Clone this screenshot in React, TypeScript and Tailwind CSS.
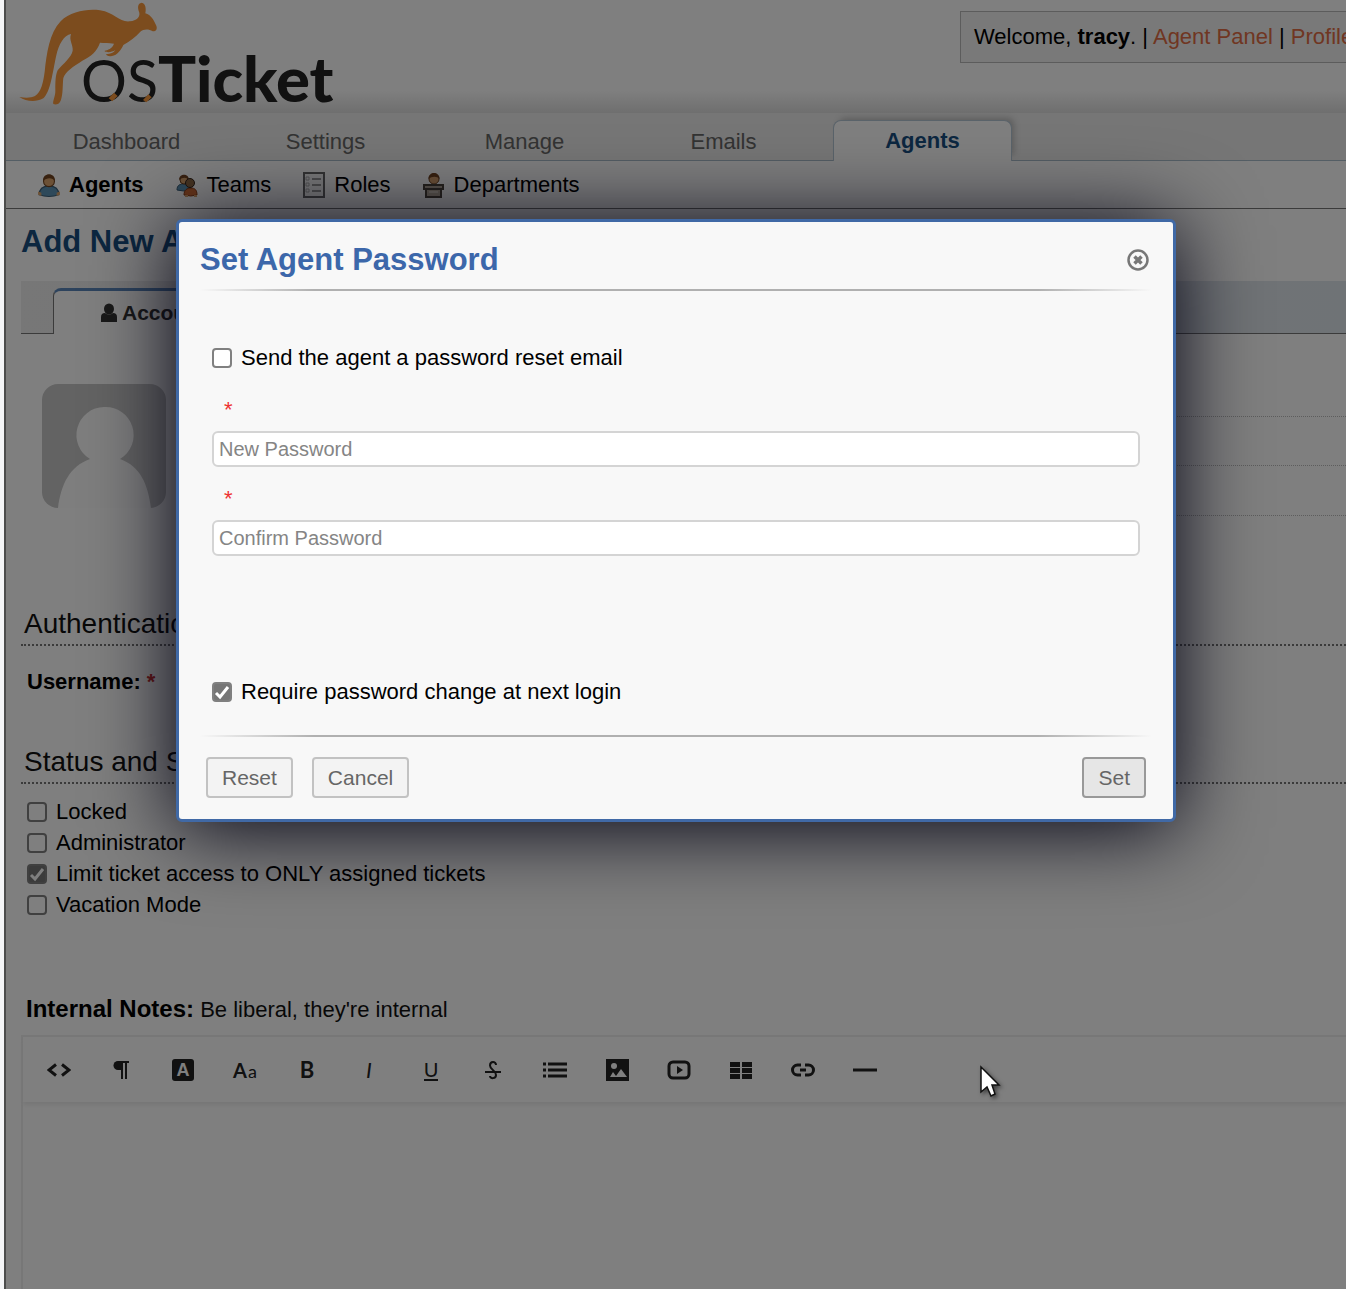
import React, { useState } from "react";

function Logo() {
  return (
    <svg viewBox="18 0 990 339" className="h-[113px] w-[330px]" role="img" aria-label="osTicket">
      <path
        fill="#f8983c"
        d="M58 291C78 294 92 294 105 288C124 276 130 245 134 215C140 160 148 100 182 64C212 34 262 26 300 31C345 38 358 68 390 64C410 61 420 52 418 38C412 22 413 10 425 8C437 10 439 26 436 40C453 44 462 62 469 77C473 88 467 95 458 94C446 86 430 87 421 95C408 110 388 124 370 135C363 150 352 166 336 168C326 170 319 167 318 163C332 161 342 158 346 150C336 157 320 159 313 153C324 149 336 147 342 131C325 128 312 130 300 128C290 156 274 168 247 182C220 200 196 214 190 234C187 258 190 280 182 302C177 313 168 315 160 312C157 303 167 290 166 270C166 248 166 226 173 211C190 190 214 172 218 152C220 134 206 122 213 102C192 106 176 132 169 166C158 215 152 276 130 295C106 308 78 304 58 291Z"
      />
      <text x="243" y="307" fontFamily="Lato, sans-serif" fill="#222222">
        <tspan fontSize="172">OS</tspan>
        <tspan fontSize="190" fontWeight="900">
          Ticket
        </tspan>
      </text>
      <path d="M326 295L342 278L353 288L337 304Z" fill="#f8983c" />
      <path d="M429 300L445 283L455 292L439 307Z" fill="#f8983c" />
    </svg>
  );
}

function AgentIcon() {
  return (
    <svg viewBox="0 0 20 22" className="h-6 w-[22px]" aria-hidden="true">
      <path d="M1 20C1 14 5 12 10 12S19 14 19 20Q10 23 1 20Z" fill="#5d93b5" stroke="#3c5f78" />
      <circle cx="10" cy="7.500" r="5" fill="#d9a36c" stroke="#70431f" />
      <path d="M4.500 7.500C4 -1 16 -1 15.500 7.500C13 4 8 4 4.500 7.500Z" fill="#70431f" />
      <path d="M0 17l3 1v3l-3-1zM20 17l-3 1v3l3-1z" fill="#d9a36c" />
    </svg>
  );
}

function TeamsIcon() {
  return (
    <svg viewBox="0 0 22 24" className="h-6 w-[22px]" aria-hidden="true">
      <path d="M1 17C1 12 4 11 8 11S14 13 14 17Q8 19 1 17Z" fill="#5d93b5" stroke="#3c5f78" />
      <circle cx="8" cy="7" r="4" fill="#d9a36c" stroke="#70431f" />
      <path d="M3 7C3 0 13 0 13 7C10 4 7 4 3 7Z" fill="#70431f" />
      <path d="M8 22C8 17 11 15 15 15S21 17 21 22Q15 24 8 22Z" fill="#cf6a32" stroke="#8a3d14" />
      <circle cx="14" cy="10" r="4.500" fill="#8d6844" stroke="#33241a" />
      <path d="M9 22h3v2h-3zM18 22h3v2h-3z" fill="#d9a36c" />
    </svg>
  );
}

function RolesIcon() {
  return (
    <svg viewBox="0 0 22 26" className="h-[26px] w-[22px]" fill="none" aria-hidden="true">
      <rect x="1" y="1" width="20" height="24" fill="#f5f5f5" stroke="#666" strokeWidth="2" />
      <path d="M9 7h9M9 13h9M9 19h9" stroke="#999" strokeWidth="2" />
      <path d="M3 5h3v3h-3zM3 11h3v3h-3zM3 17h3v3h-3z" stroke="#aaa" />
    </svg>
  );
}

function DepartmentsIcon() {
  return (
    <svg viewBox="0 0 22 26" className="h-[26px] w-[22px]" aria-hidden="true">
      <circle cx="11" cy="7" r="5" fill="#d9a36c" stroke="#70431f" />
      <path d="M5.500 7C5 -1 17 -1 16.500 7C14 4 9 4 5.500 7Z" fill="#70431f" />
      <rect x="1" y="13" width="19" height="4" fill="#b5a898" stroke="#4c443b" strokeWidth="2" />
      <rect x="3" y="17" width="15" height="8" fill="#b5a898" stroke="#4c443b" strokeWidth="2" />
      <path d="M6 20h9" stroke="#e8e0d5" />
    </svg>
  );
}

function CheckBox({ label, initial = false, name }: { label: string; initial?: boolean; name: string }) {
  const [on, setOn] = useState(initial);
  return (
    <label className="flex items-center gap-[9px] text-[22px] leading-[31px] text-black">
      <span className="relative flex size-5 shrink-0">
        <input
          type="checkbox"
          name={name}
          checked={on}
          onChange={(e) => setOn(e.target.checked)}
          className="size-5 appearance-none rounded-[4px] border-2 border-[#808080] bg-white checked:bg-[#767676]"
        />
        {on && (
          <svg viewBox="0 0 20 20" className="pointer-events-none absolute inset-0 size-5" fill="none" aria-hidden="true">
            <path d="M4 11l4 4l8-10" stroke="#fff" strokeWidth="3" />
          </svg>
        )}
      </span>
      {label}
    </label>
  );
}

const tabs = ["Dashboard", "Settings", "Manage", "Emails"];

const subTabs = [
  { label: "Agents", icon: <AgentIcon />, active: true },
  { label: "Teams", icon: <TeamsIcon />, active: false },
  { label: "Roles", icon: <RolesIcon />, active: false },
  { label: "Departments", icon: <DepartmentsIcon />, active: false },
];

const svg = "size-6";

const tools: { name: string; icon: React.ReactNode }[] = [
  {
    name: "HTML",
    icon: (
      <svg viewBox="0 0 24 24" className={svg} fill="none" stroke="currentColor" strokeWidth="3">
        <path d="M9 6.500L2 12l7 5.500M15 6.500l7 5.500l-7 5.500" />
      </svg>
    ),
  },
  {
    name: "Format",
    icon: (
      <svg viewBox="0 0 24 24" className={svg} fill="none" stroke="currentColor" strokeWidth="2">
        <path d="M11 4H20M13 3V21M17 3V21" />
        <path d="M13 3H9a4.500 4.500 0 0 0 0 9H13z" fill="currentColor" stroke="none" />
      </svg>
    ),
  },
  {
    name: "Text color",
    icon: (
      <span className="flex size-[22px] items-center justify-center rounded-[3px] bg-[#222] text-lg font-bold leading-none text-white">A</span>
    ),
  },
  {
    name: "Font family",
    icon: (
      <span className="flex items-baseline gap-px font-['Lato',sans-serif] text-xl leading-8 font-bold">
        A<span className="text-lg font-normal">a</span>
      </span>
    ),
  },
  { name: "Bold", icon: <span className="font-['Lato',sans-serif] text-[22px] leading-8 font-bold">B</span> },
  { name: "Italic", icon: <span className="font-['Lato',sans-serif] text-[22px] leading-8 italic">I</span> },
  {
    name: "Underline",
    icon: (
      <span className="border-b-2 border-[#222] font-['Lato',sans-serif] text-xl leading-5">U</span>
    ),
  },
  {
    name: "Strikethrough",
    icon: (
      <svg viewBox="0 0 24 24" className={svg} fill="none" stroke="currentColor" strokeWidth="2">
        <path d="M4 14h16" />
        <path d="M15 7C15 3 9 3 9 7.500C9 12 15 12 15 17C15 21 9 21 9 18" />
      </svg>
    ),
  },
  {
    name: "List",
    icon: (
      <svg viewBox="0 0 26 24" className="h-6 w-[26px]" stroke="currentColor" strokeWidth="3">
        <path d="M1 6h3M6 6h19M1 12h3M6 12h19M1 18h3M6 18h19" />
      </svg>
    ),
  },
  {
    name: "Image",
    icon: (
      <svg viewBox="0 0 24 24" className={svg}>
        <rect x="1" y="1" width="23" height="22" fill="currentColor" />
        <circle cx="9" cy="8" r="3" fill="#fff" />
        <path d="M5 19l3-5l3 4l5-7l6 8z" fill="#fff" />
      </svg>
    ),
  },
  {
    name: "Video",
    icon: (
      <svg viewBox="0 0 26 24" className="h-6 w-[26px]" fill="none" stroke="currentColor" strokeWidth="3">
        <rect x="3" y="4" width="20" height="16" rx="4" />
        <path d="M11 8l6 4l-6 4z" fill="currentColor" stroke="none" />
      </svg>
    ),
  },
  {
    name: "Table",
    icon: (
      <svg viewBox="0 0 24 24" className={svg} fill="currentColor">
        <path d="M1 4h10v5H1zM13 4h10v5H13zM1 10h10v5H1zM13 10h10v5H13zM1 16h10v5H1zM13 16h10v5H13z" />
      </svg>
    ),
  },
  {
    name: "Link",
    icon: (
      <svg viewBox="0 0 26 24" className="h-6 w-[26px]" fill="none" stroke="currentColor" strokeWidth="3">
        <path d="M11 7H7.500a5 5 0 0 0 0 10H11M15 7h3.500a5 5 0 0 1 0 10H15M10 12h6" />
      </svg>
    ),
  },
  {
    name: "Line",
    icon: (
      <svg viewBox="0 0 26 24" className="h-6 w-[26px]" stroke="currentColor" strokeWidth="3">
        <path d="M1 12h24" />
      </svg>
    ),
  },
];

function PasswordField({ id, placeholder }: { id: string; placeholder: string }) {
  return (
    <div className="flex flex-col">
      <label htmlFor={id} className="h-8 pl-3 text-[22px] leading-[22px] text-[#ee3333]">
        *
      </label>
      <input
        id={id}
        type="password"
        aria-label={placeholder}
        placeholder={placeholder}
        className="h-9 w-full rounded-md border-2 border-[#d4d4d4] bg-white px-[5px] text-[20px] text-black outline-none placeholder:text-[#858585]"
      />
    </div>
  );
}

function FadedRule() {
  return (
    <div className="flex" aria-hidden="true">
      <div className="h-[2px] w-[12%] bg-linear-to-r from-transparent to-[#b0b0b0]" />
      <div className="h-[2px] flex-1 bg-[#b0b0b0]" />
      <div className="h-[2px] w-[12%] bg-linear-to-l from-transparent to-[#b0b0b0]" />
    </div>
  );
}

function PasswordDialog() {
  return (
    <section
      role="dialog"
      aria-modal="true"
      aria-labelledby="dialog-title"
      className="w-full max-w-[1000px] rounded-md border-3 border-[#4069a6] bg-[#f8f8f8] px-[21px] pt-5 pb-[21px] shadow-[0_6px_84px_#000011]"
    >
      <header className="mb-[11px] flex items-center justify-between">
        <h2 id="dialog-title" className="text-[31px] leading-9 font-bold text-[#3c67aa]">
          Set Agent Password
        </h2>
        <button type="button" aria-label="Close">
          <svg viewBox="0 0 28 28" className="size-7" fill="none" stroke="#777">
            <circle cx="14" cy="14" r="9.500" strokeWidth="2.500" />
            <path d="M10.500 10.500l7 7M17.500 10.500l-7 7" strokeWidth="3.500" />
          </svg>
        </button>
      </header>
      <FadedRule />
      <form onSubmit={(e) => e.preventDefault()}>
        <div className="flex flex-col px-3 pt-[51px] pb-7">
          <CheckBox name="reset-email" label="Send the agent a password reset email" />
          <div className="mt-[26px] flex flex-col gap-[21px]">
            <PasswordField id="new-password" placeholder="New Password" />
            <PasswordField id="confirm-password" placeholder="Confirm Password" />
          </div>
          <div className="mt-30">
            <CheckBox name="require-change" initial label="Require password change at next login" />
          </div>
        </div>
        <FadedRule />
        <footer className="mt-5 flex items-center gap-[19px] px-[6px] text-[21px] text-[#666]">
          <button type="reset" className="h-[41px] rounded-[4px] border-2 border-[#c2c2c2] bg-[#f3f3f3] px-[14px]">
            Reset
          </button>
          <button type="button" className="h-[41px] rounded-[4px] border-2 border-[#c2c2c2] bg-[#f3f3f3] px-[14px]">
            Cancel
          </button>
          <button type="submit" className="ml-auto h-[41px] rounded-[4px] border-2 border-[#999] bg-[#e6e6e6] px-[14px]">
            Set
          </button>
        </footer>
      </form>
    </section>
  );
}

function SectionHeading({ children }: { children: React.ReactNode }) {
  return (
    <h3 className="border-b-2 border-dotted border-[#777] pl-[3px] text-[28px] leading-10 text-[#111]">{children}</h3>
  );
}

export default function App() {
  return (
    <div className="flex min-h-screen bg-[#f4f5f7] pl-1 font-['Liberation_Sans',Arial,sans-serif]">
      <div className="relative flex min-w-0 flex-1 flex-col overflow-hidden border-l-2 border-[#4c4c4c] bg-white">
        <header className="flex items-start bg-linear-to-b from-white from-80% to-[#dedede]">
          <div className="w-[954px] shrink-0">
            <Logo />
          </div>
          <p className="mt-[11px] shrink-0 border border-[#b8b8b8] bg-[#f3f3f3] px-[13px] text-[22px] leading-[50px] whitespace-nowrap text-black">
            Welcome, <strong>tracy</strong>. | <a href="#panel" className="text-[#e06c44]">Agent Panel</a> |{" "}
            <a href="#profile" className="text-[#e06c44]">Profile</a>
          </p>
        </header>

        <nav className="flex h-12 items-end gap-5 border-b border-[#a9bccb] bg-[#ececec] pl-[31px] text-[22px]">
          {tabs.map((t) => (
            <a key={t} href="#tab" className="w-[179px] shrink-0 text-center leading-9 text-[#666]">
              {t}
            </a>
          ))}
          <a
            href="#agents"
            className="-mb-px h-[41px] w-[179px] shrink-0 rounded-t-lg border border-b-0 border-[#b5c6d4] bg-white text-center leading-10 font-bold text-[#184e81] shadow-[4px_-4px_6px_-2px_#bbb]"
          >
            Agents
          </a>
        </nav>

        <nav className="flex h-12 items-center gap-8 border-b border-[#777] bg-white pl-8 text-[22px] text-black">
          {subTabs.map((s) => (
            <a key={s.label} href="#sub" className={s.active ? "flex items-center gap-[9px] font-bold" : "flex items-center gap-[9px]"}>
              {s.icon}
              {s.label}
            </a>
          ))}
        </nav>

        <main className="flex flex-1 flex-col pl-[15px]">
          <h1 className="pt-[15px] pb-[21px] text-[31px] leading-9 font-bold text-[#184e81]">Add New Agent</h1>

          <div className="flex h-[53px] items-end bg-linear-to-r from-[#eeeeee] to-[#dfe6ec]">
            <div className="h-full w-8 border-b border-[#777]" />
            <a
              href="#account"
              className="flex h-[46px] w-[230px] items-center gap-1 rounded-tl-lg border-t-3 border-l border-t-[#5b87bb] border-l-[#777] bg-white pl-[46px] text-[21px] font-bold text-[#333]"
            >
              <svg viewBox="0 0 18 20" className="h-5 w-[18px]" fill="#333" aria-hidden="true">
                <ellipse cx="9" cy="6" rx="5" ry="5.500" />
                <path d="M1 19V14q0-4 4-4q4 3 8 0q4 0 4 4v5z" />
              </svg>
              Account
            </a>
            <div className="h-full flex-1 border-b border-[#777]" />
          </div>

          <div className="mb-[87px] flex items-start gap-10">
            <svg viewBox="0 0 124 124" className="mt-[50px] ml-[21px] size-31 shrink-0 rounded-2xl bg-[#c6c6c6]" role="img" aria-label="Avatar">
              <path d="M62 23a28 28 0 0 1 16 52C98 82 106 100 109 124H16C19 100 28 82 48 75A28 28 0 0 1 62 23Z" fill="#fcfcfc" />
            </svg>
            <div className="flex-1">
              <div className="h-[83px] border-b border-dotted border-[#bbb]" />
              <div className="h-[49px] border-b border-dotted border-[#bbb]" />
              <div className="h-[50px] border-b border-dotted border-[#bbb]" />
            </div>
          </div>

          <div className="pt-px">
            <SectionHeading>Authentication</SectionHeading>
          </div>
          <p className="py-5 pl-[6px] text-[22px] leading-8 font-bold text-black">
            Username: <span className="text-[#c83030]">*</span>
          </p>
          <div className="pt-6">
            <SectionHeading>Status and Settings</SectionHeading>
          </div>
          <div className="flex flex-col pt-3 pl-[6px]">
            <CheckBox name="locked" label="Locked" />
            <CheckBox name="admin" label="Administrator" />
            <CheckBox name="limit" initial label="Limit ticket access to ONLY assigned tickets" />
            <CheckBox name="vacation" label="Vacation Mode" />
          </div>

          <p className="mt-[73px] pl-[5px] text-[22px] leading-8 text-[#111]">
            <strong className="text-2xl leading-8 text-black">Internal Notes:</strong> Be liberal, they're internal
          </p>

          <div className="mt-[9px] flex flex-1 flex-col border-t-2 border-l-2 border-[#eeeeee]">
            <div className="flex h-[65px] items-center pl-[5px] text-[#222] shadow-[0_3px_4px_#ececec]">
              {tools.map((t) => (
                <button key={t.name} type="button" aria-label={t.name} className="flex w-[62px] shrink-0 items-center justify-center">
                  {t.icon}
                </button>
              ))}
            </div>
            <textarea aria-label="Internal Notes" className="w-full flex-1 resize-none bg-transparent p-4 outline-none" />
          </div>
        </main>

        <div className="absolute inset-0 flex items-start justify-center bg-black/50 pt-[219px]">
          <PasswordDialog />
        </div>

        <svg viewBox="0 0 22 34" className="absolute top-[1065px] left-[973px] h-[34px] w-[22px] drop-shadow-[2px_2px_2px_rgba(0,0,0,0.5)]" aria-hidden="true">
          <path d="M2 2V27L8 22L12 31L16 29L13 20H20Z" fill="#fff" stroke="#111" strokeWidth="1.500" />
        </svg>
      </div>
    </div>
  );
}
